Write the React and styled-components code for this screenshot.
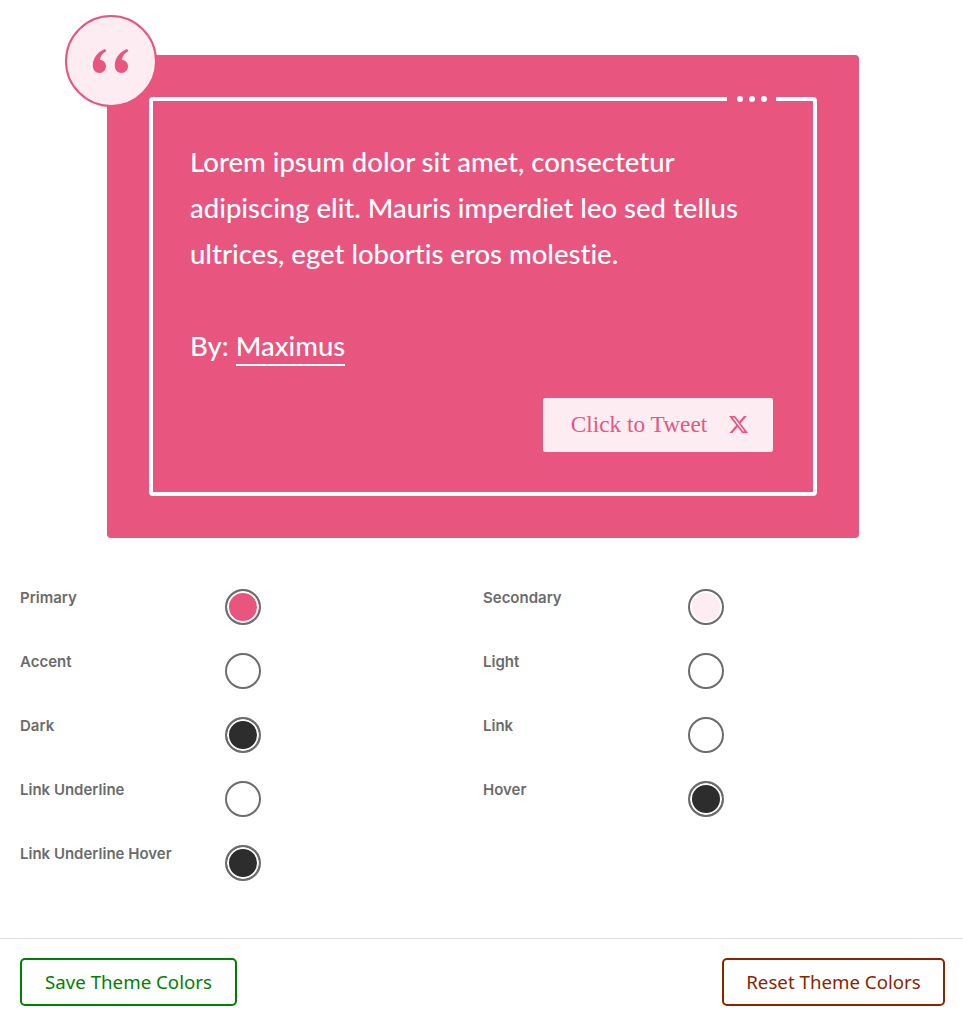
import React from 'react';
import styled, { createGlobalStyle } from 'styled-components';

const Global = createGlobalStyle`
  html, body { margin: 0; padding: 0; background: #fff; }
  * { box-sizing: border-box; }
`;

const Preview = styled.div`
  padding: 55px 104px 0 107px;
`;

const Card = styled.div`
  position: relative;
  width: 752px;
  padding: 42px 42px 42px 41.5px;
  background: #e8557f;
  border-radius: 4px;
`;

const QuoteBadge = styled.div`
  position: absolute;
  left: -42px;
  top: -40px;
  width: 92px;
  height: 92px;
  display: flex;
  align-items: center;
  justify-content: center;
  background: #fdedf3;
  border: 2px solid #e8557f;
  border-radius: 50%;
`;

const Frame = styled.div`
  position: relative;
  padding: 38px 40px 40px 37.5px;
  border: 4px solid #fff;
  border-radius: 4px;
  display: flex;
  flex-direction: column;
`;

const Dots = styled.div`
  position: absolute;
  top: -4px;
  right: 37px;
  width: 49px;
  height: 4px;
  background: #e8557f;
  display: flex;
  align-items: center;
  justify-content: center;
  gap: 6px;
`;

const Dot = styled.span`
  width: 6px;
  height: 6px;
  flex: none;
  border-radius: 50%;
  background: #fff;
`;

const QuoteText = styled.p`
  margin: 0 0 46px;
  font-family: Lato, sans-serif;
  font-size: 27.5px;
  font-weight: 500;
  font-variant-ligatures: none;
  line-height: 46px;
  color: #fff;
`;

const Byline = styled.div`
  font-family: Lato, sans-serif;
  font-size: 27.5px;
  font-weight: 500;
  font-variant-ligatures: none;
  line-height: 46px;
  color: #fff;
`;

const Author = styled.a`
  display: inline-block;
  line-height: 37px;
  color: #fff;
  border-bottom: 2px solid #fff;
`;

const TweetButton = styled.a`
  align-self: flex-end;
  margin-top: 29px;
  width: 230px;
  height: 54px;
  padding: 0 0 2px 4px;
  display: flex;
  align-items: center;
  justify-content: center;
  gap: 21px;
  background: #fdedf3;
  border-radius: 2px;
  color: #e8557f;
  font-family: "Liberation Serif", serif;
  font-size: 23.3px;
`;

const Colors = styled.div`
  display: grid;
  grid-template-columns: 463px 1fr;
  row-gap: 28px;
  padding: 51px 20px 0;
`;

const ColorRow = styled.div`
  display: grid;
  grid-template-columns: 205px 36px;
  height: 36px;
`;

const ColorLabel = styled.label`
  font-family: Inter, sans-serif;
  font-size: 15px;
  font-weight: 600;
  line-height: 18px;
  color: #6b6b6b;
`;

const Swatch = styled.span`
  width: 36px;
  height: 36px;
  border-radius: 50%;
  border: 2.5px solid #6c6c6c;
  box-shadow: inset 0 0 0 2px #fff;
  background: ${(p) => p.$color};
`;

const Footer = styled.div`
  margin-top: 57px;
  padding: 19px 18px 0 20px;
  border-top: 1px solid #ddd;
  display: flex;
  justify-content: space-between;
`;

const ActionButton = styled.button`
  height: 48px;
  width: ${(p) => p.$width}px;
  padding: 0 0 2px;
  background: #fff;
  border: 2px solid ${(p) => p.$color};
  border-radius: 5px;
  color: ${(p) => p.$color};
  font-family: "Noto Sans", sans-serif;
  font-size: 18.7px;
`;

const swatches = [
  ['Primary', '#e8557f'],
  ['Secondary', '#fdedf3'],
  ['Accent', '#fff'],
  ['Light', '#fff'],
  ['Dark', '#2d2d2d'],
  ['Link', '#fff'],
  ['Link Underline', '#fff'],
  ['Hover', '#2d2d2d'],
  ['Link Underline Hover', '#2d2d2d'],
];

const QuoteMark = () => (
  <svg width="38" height="26" viewBox="0 0 38 26" fill="#e8557f" aria-hidden="true">
    <path d="M13 1C7 3 1.200 9 .8 16.500.5 21.500 3.500 25 7.500 25c3.700 0 6.500-3 6.500-6.700 0-3.700-2.800-6.300-6.200-6.300C8.500 8.200 10.500 5 14.500 3z" />
    <path d="M35 1C29 3 23.200 9 22.800 16.500 22.500 21.500 25.500 25 29.500 25c3.700 0 6.500-3 6.500-6.700 0-3.700-2.800-6.300-6.200-6.300C30.500 8.200 32.500 5 36.500 3z" />
  </svg>
);

const XLogo = () => (
  <svg width="21" height="21" viewBox="0 0 24 24" fill="currentColor" aria-hidden="true">
    <path d="M18.244 2.250h3.308l-7.227 8.260 8.502 11.240H16.170l-5.214-6.817L4.990 21.750H1.680l7.730-8.835L1.254 2.250H8.080l4.713 6.231zm-1.161 17.520h1.833L7.084 4.126H5.117z" />
  </svg>
);

export default function App() {
  return (
    <>
      <Global />
      <Preview>
        <Card>
          <QuoteBadge>
            <QuoteMark />
          </QuoteBadge>
          <Frame>
            <Dots>
              <Dot />
              <Dot />
              <Dot />
            </Dots>
            <QuoteText>
              Lorem ipsum dolor sit amet, consectetur adipiscing elit. Mauris imperdiet leo sed tellus ultrices, eget lobortis eros molestie.
            </QuoteText>
            <Byline>
              By: <Author>Maximus</Author>
            </Byline>
            <TweetButton>
              Click to Tweet
              <XLogo />
            </TweetButton>
          </Frame>
        </Card>
      </Preview>
      <Colors>
        {swatches.map(([name, color]) => (
          <ColorRow key={name}>
            <ColorLabel>{name}</ColorLabel>
            <Swatch $color={color} />
          </ColorRow>
        ))}
      </Colors>
      <Footer>
        <ActionButton $color="#008000" $width={217}>Save Theme Colors</ActionButton>
        <ActionButton $color="#8a2400" $width={223}>Reset Theme Colors</ActionButton>
      </Footer>
    </>
  );
}
